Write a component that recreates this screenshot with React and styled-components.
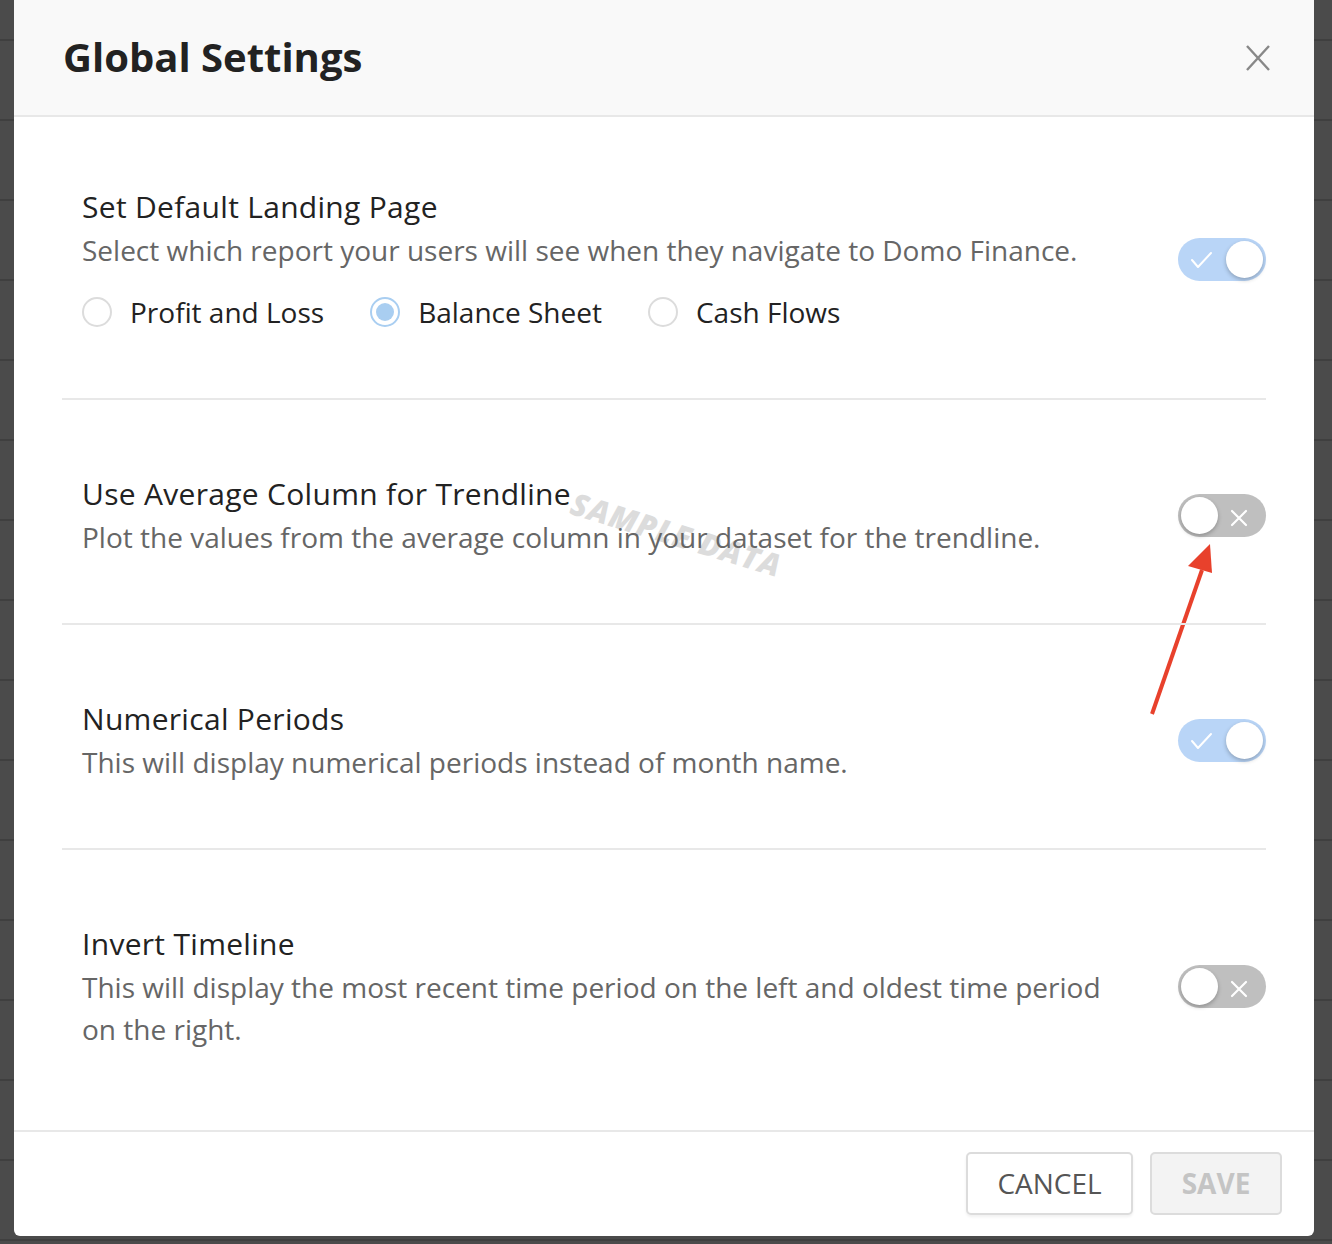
import React from 'react';
import styled, { createGlobalStyle } from 'styled-components';

const GlobalStyle = createGlobalStyle`
  html, body {
    margin: 0;
    padding: 0;
  }
  body {
    font-family: 'Open Sans', 'Noto Sans', sans-serif;
    background-color: #4b4b4b;
    background-image: repeating-linear-gradient(
      to bottom,
      transparent 0px,
      transparent 39px,
      #3f3f3f 39px,
      #3f3f3f 41px,
      transparent 41px,
      transparent 80px
    );
  }
`;

const Page = styled.div`
  width: 1332px;
  height: 1244px;
  padding: 0 18px 8px 14px;
  box-sizing: border-box;
  display: flex;
`;

const Modal = styled.div`
  position: relative;
  flex: 1;
  background: #fff;
  border-radius: 0 0 6px 6px;
  display: flex;
  flex-direction: column;
  overflow: hidden;
`;

const Header = styled.div`
  height: 117px;
  box-sizing: border-box;
  background: #f9f9f9;
  border-bottom: 2px solid #e8e8e8;
  display: flex;
  align-items: center;
  justify-content: space-between;
  padding: 0 44px 2px 49px;
`;

const Title = styled.h1`
  margin: 0;
  font-size: 40px;
  font-weight: 700;
  color: #222;
`;

const CloseButton = styled.button`
  border: none;
  background: none;
  padding: 0;
  margin-top: 3px;
  width: 24px;
  height: 26px;
  cursor: pointer;
  display: flex;
  align-items: center;
  justify-content: center;
`;

const Body = styled.div`
  position: relative;
  z-index: 1;
  flex: 1;
  padding: 0 48px;
  display: flex;
  flex-direction: column;
`;

const Section = styled.div`
  display: flex;
  align-items: center;
  gap: 40px;
  padding: ${p => p.$pad || '72px 0 65px 20px'};
  border-bottom: ${p => (p.$last ? 'none' : '2px solid #e8e8e8')};
`;

const TextCol = styled.div`
  flex: 1;
  min-width: 0;
`;

const SectionTitle = styled.div`
  font-size: 30px;
  line-height: 44px;
  letter-spacing: 0.3px;
  color: #222;
`;

const Description = styled.div`
  font-size: 28px;
  line-height: 42px;
  color: #666;
`;

const RadioGroup = styled.div`
  display: flex;
  align-items: center;
  gap: 46px;
  margin-top: 20px;
`;

const RadioLabel = styled.label`
  display: flex;
  align-items: center;
  gap: 18px;
  font-size: 28px;
  line-height: 42px;
  color: #222;
  cursor: pointer;
`;

const RadioCircle = styled.span`
  width: 30px;
  height: 30px;
  box-sizing: border-box;
  border-radius: 50%;
  border: 2px solid ${p => (p.$checked ? '#a9cef1' : '#dcdcdc')};
  display: flex;
  align-items: center;
  justify-content: center;
  &::after {
    content: '';
    width: 18px;
    height: 18px;
    border-radius: 50%;
    background: ${p => (p.$checked ? '#a9cef1' : 'transparent')};
  }
`;

const Track = styled.div`
  position: relative;
  flex-shrink: 0;
  width: 88px;
  height: 43px;
  border-radius: 22px;
  background: ${p => (p.$on ? '#b9d5f7' : '#bfbfbf')};
  cursor: pointer;
`;

const Knob = styled.span`
  position: absolute;
  top: 3px;
  left: ${p => (p.$on ? '48px' : '3px')};
  width: 37px;
  height: 37px;
  border-radius: 50%;
  background: #fff;
  box-shadow: 0 2px 4px rgba(0, 0, 0, 0.25);
`;

const TrackIcon = styled.svg`
  position: absolute;
  top: 0;
  left: ${p => (p.$on ? '12px' : '52px')};
  height: 43px;
`;

const Watermark = styled.div`
  position: absolute;
  z-index: 0;
  left: 558px;
  top: 481px;
  font-size: 31px;
  font-weight: 800;
  font-style: italic;
  letter-spacing: 1px;
  color: #dcdcdc;
  transform: rotate(17deg);
  transform-origin: left center;
  pointer-events: none;
  white-space: nowrap;
`;

const Arrow = styled.svg`
  position: absolute;
  left: 1130px;
  top: 530px;
  pointer-events: none;
`;

const Footer = styled.div`
  border-top: 2px solid #e8e8e8;
  height: 106px;
  box-sizing: border-box;
  display: flex;
  align-items: center;
  justify-content: flex-end;
  gap: 17px;
  padding: 0 32px 2px 0;
`;

const Button = styled.button`
  height: 63px;
  box-sizing: border-box;
  border-radius: 5px;
  border: 2px solid #dcdcdc;
  font-family: 'Open Sans', sans-serif;
  font-size: 28px;
  padding: 0 20px;
  background: ${p => (p.$primary ? '#f3f3f3' : '#fff')};
  color: ${p => (p.$primary ? '#c4c4c4' : '#555')};
  font-weight: ${p => (p.$primary ? 700 : 400)};
  box-shadow: ${p => (p.$primary ? 'none' : '0 2px 3px rgba(0,0,0,0.06)')};
  min-width: ${p => (p.$primary ? '132px' : '167px')};
  cursor: pointer;
`;

const Toggle = ({ on }) => (
  <Track $on={on}>
    {on ? (
      <TrackIcon $on width="24" viewBox="0 0 24 43">
        <path d="M2 22 L8 29 L21 15" fill="none" stroke="#fff" strokeWidth="2" strokeLinecap="round" strokeLinejoin="round" />
      </TrackIcon>
    ) : (
      <TrackIcon width="18" viewBox="0 0 18 43">
        <path d="M2 17 L16 31 M16 17 L2 31" fill="none" stroke="#fff" strokeWidth="2.2" strokeLinecap="round" />
      </TrackIcon>
    )}
    <Knob $on={on} />
  </Track>
);

const Radio = ({ label, checked }) => (
  <RadioLabel>
    <RadioCircle $checked={checked} />
    {label}
  </RadioLabel>
);

export default function App() {
  return (
    <>
      <GlobalStyle />
      <Page>
        <Modal>
          <Header>
            <Title>Global Settings</Title>
            <CloseButton aria-label="Close">
              <svg width="24" height="26" viewBox="0 0 24 26">
                <path d="M1 1 L23 25 M23 1 L1 25" stroke="#888" strokeWidth="2.4" fill="none" />
              </svg>
            </CloseButton>
          </Header>
          <Watermark>SAMPLE DATA</Watermark>
          <Body>
            <Section $pad="68px 0 65px 20px">
              <TextCol>
                <SectionTitle>Set Default Landing Page</SectionTitle>
                <Description>Select which report your users will see when they navigate to Domo Finance.</Description>
                <RadioGroup>
                  <Radio label="Profit and Loss" />
                  <Radio label="Balance Sheet" checked />
                  <Radio label="Cash Flows" />
                </RadioGroup>
              </TextCol>
              <Toggle on />
            </Section>
            <Section>
              <TextCol>
                <SectionTitle>Use Average Column for Trendline</SectionTitle>
                <Description>Plot the values from the average column in your dataset for the trendline.</Description>
              </TextCol>
              <Toggle />
            </Section>
            <Section>
              <TextCol>
                <SectionTitle>Numerical Periods</SectionTitle>
                <Description>This will display numerical periods instead of month name.</Description>
              </TextCol>
              <Toggle on />
            </Section>
            <Section $last>
              <TextCol>
                <SectionTitle>Invert Timeline</SectionTitle>
                <Description>
                  This will display the most recent time period on the left and oldest time period on the right.
                </Description>
              </TextCol>
              <Toggle />
            </Section>
          </Body>
          <Footer>
            <Button>CANCEL</Button>
            <Button $primary>SAVE</Button>
          </Footer>
        </Modal>
        <Arrow width="100" height="200" viewBox="0 0 100 200">
          <line x1="22" y1="184" x2="72" y2="40" stroke="#e8412c" strokeWidth="4" />
          <polygon points="80,14 58,36 82,43" fill="#e8412c" />
        </Arrow>
      </Page>
    </>
  );
}
